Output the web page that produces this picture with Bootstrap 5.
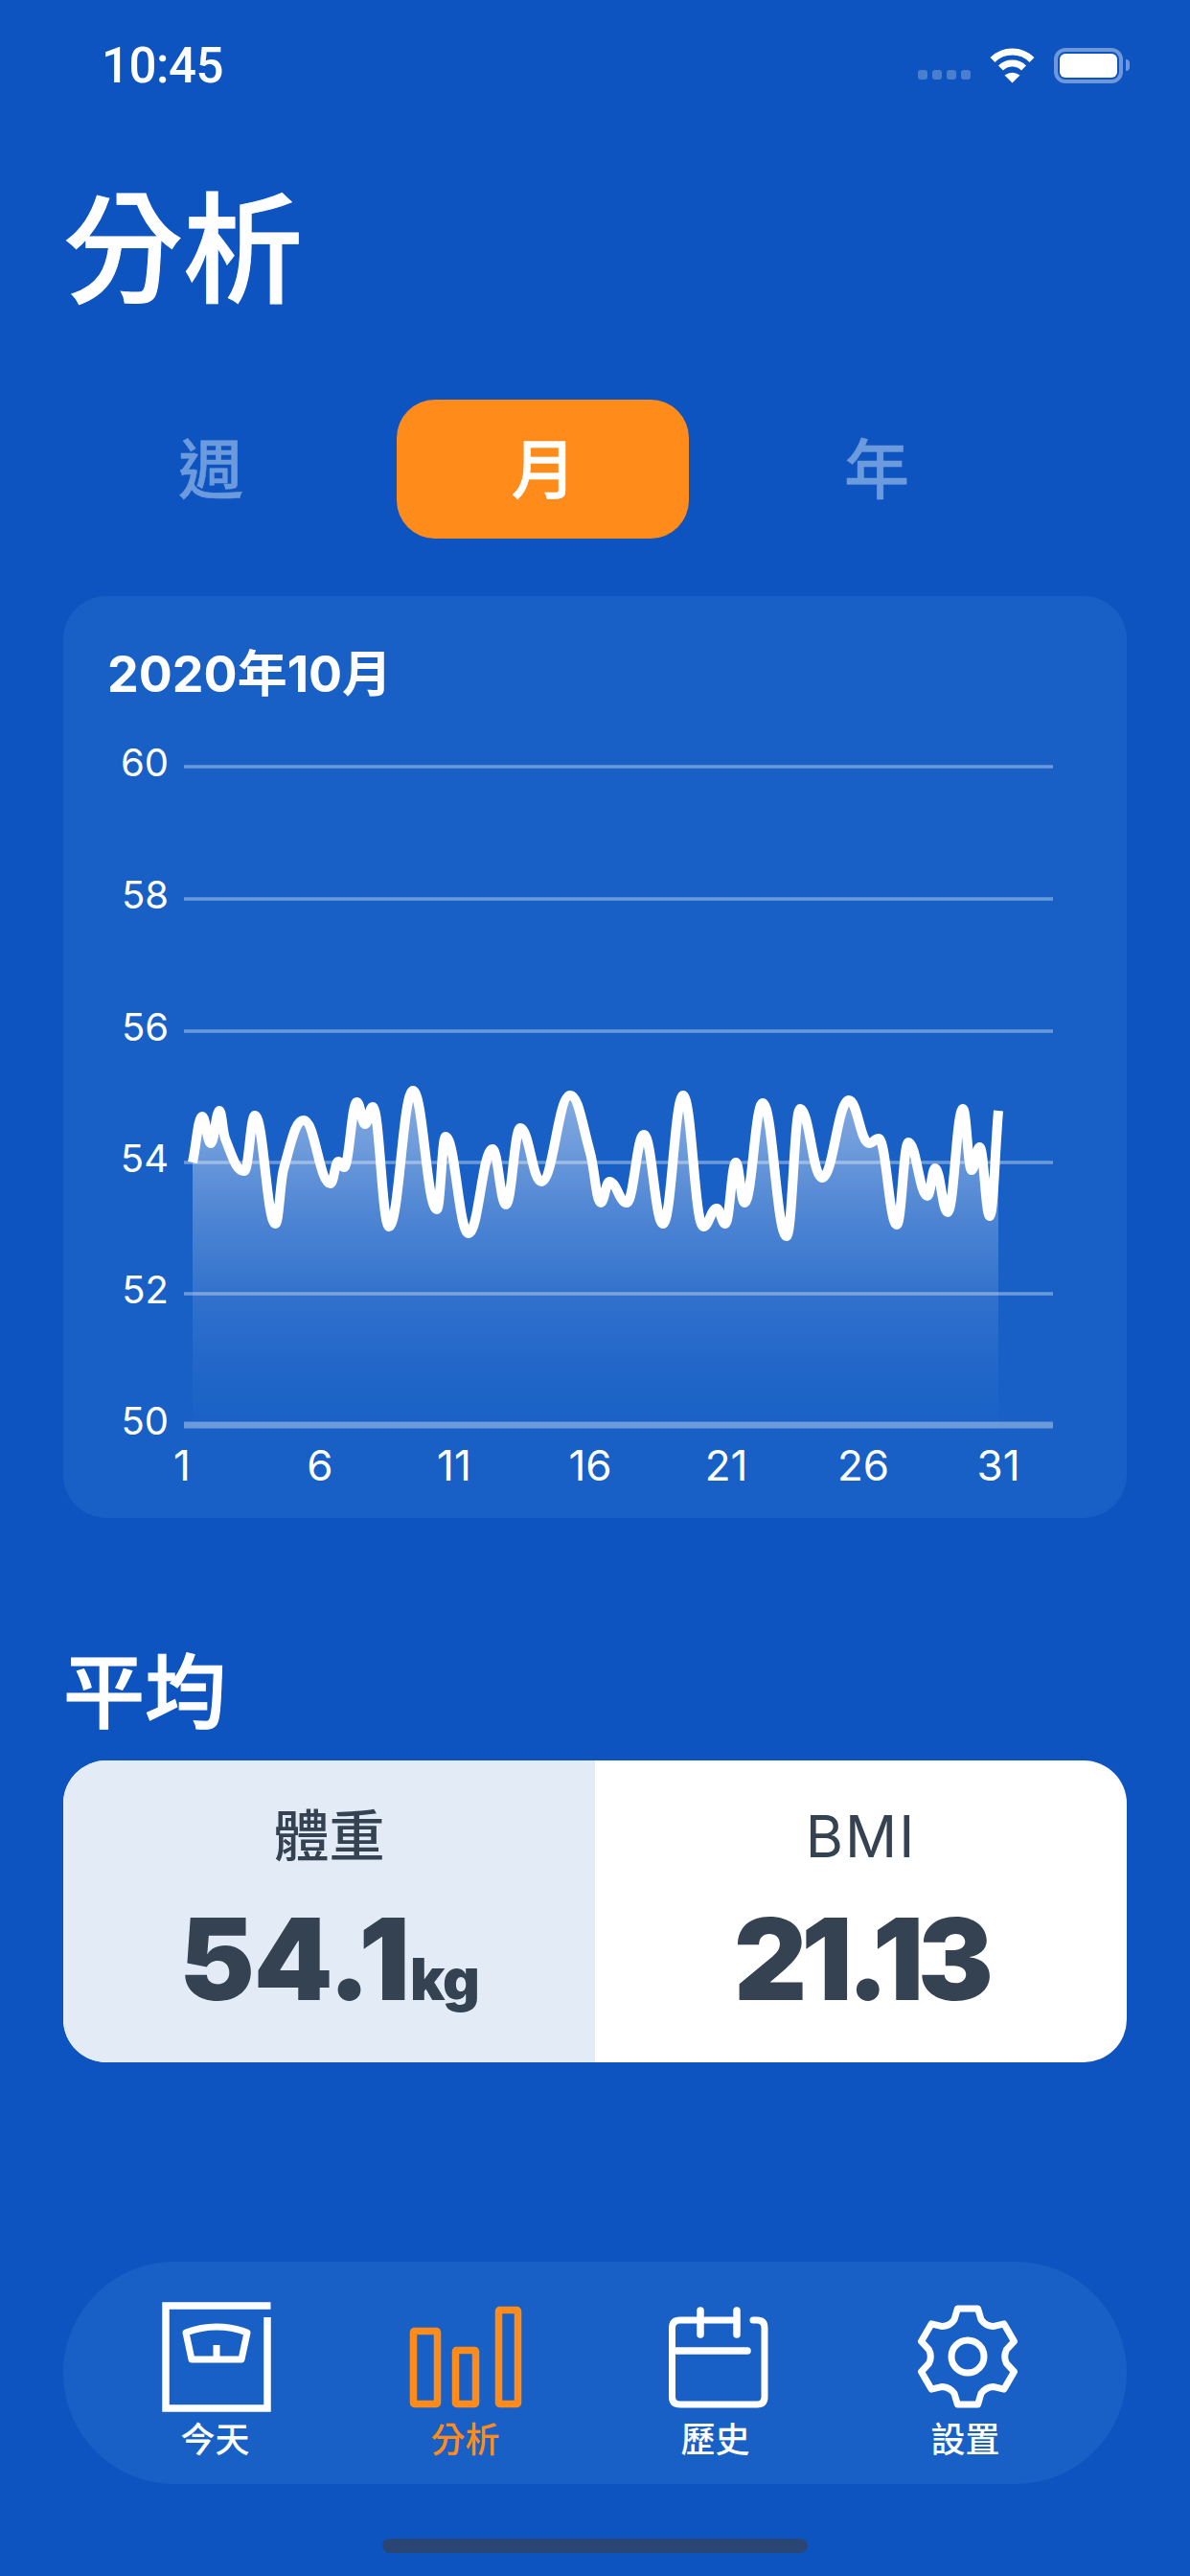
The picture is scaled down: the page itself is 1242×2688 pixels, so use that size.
<!DOCTYPE html>
<html lang="zh-Hant">
<head>
  <meta charset="UTF-8" />
  <meta name="viewport" content="width=device-width, initial-scale=1.0"/>
  <title>分析</title>
  <link href="https://cdn.jsdelivr.net/npm/bootstrap@5.3.3/dist/css/bootstrap.min.css" rel="stylesheet">
  <style>
    body {
      background: #0e54c0;
      color: #fff;
      font-family: "Inter", "Noto Sans CJK TC", sans-serif;
    }
    .phone {
      width: 1242px;
      height: 2688px;
      padding: 0 66px;
      overflow: hidden;
    }
    .status-row { height: 136px; padding-left: 40px; padding-right: 4px; }
    .status-time { font-size: 51px; font-weight: 500; line-height: 1; letter-spacing: -.5px; font-family: "Roboto", sans-serif; }
    .status-dots { gap: 5px; margin-top: 20px; margin-right: 20px; }
    .status-dots i { width: 10px; height: 10px; border-radius: 3px; background: rgba(255,255,255,.25); }
    .battery-box {
      width: 72px; height: 37px;
      margin-left: 20px;
      padding: 2px;
      border: 4px solid rgba(255,255,255,.4);
      border-radius: 12px;
    }
    .battery-box i { width: 100%; height: 100%; background: #fff; border-radius: 6px; }
    .battery-nub { width: 4px; height: 12px; margin: 0 -7px 0 3px; background: rgba(255,255,255,.4); border-radius: 0 4px 4px 0; }
    .page-title { margin: 62px 0 -2px; font-size: 125px; line-height: 126px; font-weight: 500; -webkit-text-stroke: 1px #fff; }
    .range-tabs { margin-top: 95px; gap: 42.5px; --bs-nav-pills-border-radius: 40px; --bs-nav-pills-link-active-bg: #ff8c1a; --bs-nav-pills-link-active-color: #fff; }
    .range-tabs .nav-link {
      width: 305px;
      height: 145px;
      padding: 0 0 0 3px;
      font-size: 68px;
      font-weight: 500;
      -webkit-text-stroke: .5px currentColor;
      line-height: 147px;
      text-align: center;
      color: #6c9bdd;
    }
    .range-tabs .nav-link.active { color: #fff; }
    .chart-card {
      height: 962px;
      margin-top: 60px;
      background: #1860c6;
      border: 0;
      border-radius: 45px;
      color: #fff;
    }
    .chart-heading { margin: 52px 0 36px 46px; font-size: 52px; line-height: 60px; font-weight: 700; }
    .chart-svg { display: block; }
    .chart-svg text { fill: #fff; font-family: "Inter", sans-serif; }
    .section-title { margin: 138px 0 25px; font-size: 85px; line-height: 90px; font-weight: 500; -webkit-text-stroke: 1px #fff; }
    .avg-card { height: 315px; border-radius: 45px; overflow: hidden; background: #fff; color: #354252; }
    .avg-weight { background: #e3ecf6; }
    .avg-label { margin-top: 46px; font-size: 58px; line-height: 66px; font-weight: 500; }
    .avg-label.is-latin { font-size: 60px; font-weight: 400; letter-spacing: 2px; }
    .avg-value { margin-top: 30px; font-size: 118px; line-height: 130px; font-weight: 900; letter-spacing: -6px; }
    .avg-value.is-wide { letter-spacing: -1px; }
    .avg-value small { font-size: 60px; letter-spacing: -1px; margin-left: 1px; }
    .tab-pill {
      height: 232px;
      margin-top: 208px;
      padding: 40px 28px 0;
      background: #1860c6;
      border-radius: 116px;
    }
    .tab-item { width: 261px; color: #fff; font-size: 36px; line-height: 44px; font-weight: 500; }
    .tab-item svg { display: block; margin-bottom: 4px; }
    .tab-item.is-on { color: #ff8c1a; }
    .home-bar { width: 444px; height: 15px; margin: 57px auto 0; background: #2a4674; border-radius: 8px; }
  </style>
</head>
<body>
  <div class="phone d-flex flex-column">
    <div class="status-row d-flex align-items-center justify-content-between">
      <span class="status-time">10:45</span>
      <div class="d-flex align-items-center">
        <div class="status-dots d-flex"><i></i><i></i><i></i><i></i></div>
        <svg width="47" height="37" viewBox="0 0 47 37">
          <path d="M3 12.5a29 29 0 0 1 41 0M11.5 21a17 17 0 0 1 24 0" fill="none" stroke="#fff" stroke-width="7"/>
          <path d="M23.5 36.5L15.5 28.5Q23.5 23 31.5 28.5Z" fill="#fff"/>
        </svg>
        <div class="battery-box d-flex"><i></i></div>
        <div class="battery-nub"></div>
      </div>
    </div>

    <h1 class="page-title">分析</h1>

    <div class="nav nav-pills range-tabs">
      <a class="nav-link" href="#">週</a>
      <a class="nav-link active" href="#">月</a>
      <a class="nav-link" href="#">年</a>
    </div>

    <div class="card chart-card">
      <div class="chart-heading">2020年10月</div>
      <svg class="chart-svg" id="chart" width="1110" height="800" viewBox="66 770 1110 800">
        <defs>
          <linearGradient id="areaFill" gradientUnits="userSpaceOnUse" x1="0" y1="1130" x2="0" y2="1487">
            <stop offset="0" stop-color="#fff" stop-opacity=".5"/>
            <stop offset=".364" stop-color="#fff" stop-opacity=".25"/>
            <stop offset=".644" stop-color="#fff" stop-opacity=".1"/>
            <stop offset=".832" stop-color="#fff" stop-opacity=".04"/>
            <stop offset="1" stop-color="#fff" stop-opacity=".01"/>
          </linearGradient>
        </defs>
      </svg>
    </div>

    <div class="section-title">平均</div>

    <div class="row g-0 avg-card text-center">
      <div class="col-6 avg-weight">
        <div class="avg-label">體重</div>
        <div class="avg-value is-wide">54.1<small>kg</small></div>
      </div>
      <div class="col-6">
        <div class="avg-label is-latin">BMI</div>
        <div class="avg-value">21.13</div>
      </div>
    </div>

    <div class="tab-pill d-flex">
      <div class="tab-item d-flex flex-column align-items-center">
        <svg width="130" height="120" viewBox="0 0 130 120" fill="none" stroke="#fff" stroke-width="7.5">
          <path d="M119 18V113H13V6H122.5"/>
          <path d="M34 34Q66 22 98 34L92 62H40ZM66 62V47" stroke-width="7" stroke-linejoin="round"/>
        </svg>
        今天
      </div>
      <div class="tab-item is-on d-flex flex-column align-items-center">
        <svg width="130" height="120" viewBox="0 0 130 120" fill="none" stroke="#ff8c1a" stroke-width="7.5">
          <rect x="10.5" y="32.5" width="25" height="76" rx="1"/>
          <rect x="54.5" y="52.5" width="21" height="56" rx="1"/>
          <rect x="99.5" y="10.5" width="20" height="98" rx="1"/>
        </svg>
        分析
      </div>
      <div class="tab-item d-flex flex-column align-items-center">
        <svg width="130" height="120" viewBox="0 0 130 120" fill="none" stroke="#fff" stroke-width="7" stroke-linecap="round">
          <path d="M104 21H108Q116 21 116 29V101Q116 109 108 109H28Q19.5 109 19.5 101V29Q19.5 21 28 21H45M54 21H82"/>
          <path d="M49 11V36M87 11V36M21 53H98" stroke-width="7.5"/>
        </svg>
        歷史
      </div>
      <div class="tab-item d-flex flex-column align-items-center">
        <svg width="130" height="120" viewBox="0 0 130 120" fill="none" stroke="#fff" stroke-width="7" stroke-linejoin="round">
          <path id="gear"/>
          <circle cx="67" cy="59" r="17"/>
        </svg>
        設置
      </div>
    </div>

    <div class="home-bar"></div>
  </div>

  <script src="https://cdn.jsdelivr.net/npm/bootstrap@5.3.3/dist/js/bootstrap.bundle.min.js"></script>
  <script>
    // weight line, traced point by point
    const LINE = [
      [201,1213],[211,1165],[220,1193],[229,1159],[235,1188],[255,1222],[266,1164],[287.5,1277],[296,1220],[317,1169],
      [345,1235],[353,1212],[359,1218],[372.5,1150],[381,1173],[389,1155],[406,1280],[431,1138],[456,1262],[465,1186],
      [489,1287],[514,1199],[528,1257],[543,1177],[565,1233],[595,1143],[616,1203],[627,1255],[636,1233],[654,1255],
      [672,1184],[692,1277],[713,1143],[734,1280],[748,1261],[757,1277],[768,1213],[777,1255],[796,1151],[821,1290],
      [835,1157],[858,1229],[886,1148],[907,1193],[917,1188],[936,1278],[948,1192],[968,1248],[976,1219],[989,1265],
      [1005,1157],[1014,1221],[1022.5,1197],[1033,1269],[1042,1159]
    ];
    const Y_LABELS = [[60,800],[58,938],[56,1076],[54,1213],[52,1350],[50,1487]];
    const X_LABELS = [[1,190],[6,334],[11,474],[16,616],[21,758],[26,901],[31,1042]];
    const SVG_NS = 'http://www.w3.org/2000/svg';
    const chart = document.getElementById('chart');

    function add(tag, attrs, text) {
      const el = document.createElementNS(SVG_NS, tag);
      Object.keys(attrs).forEach(k => el.setAttribute(k, attrs[k]));
      if (text !== undefined) el.textContent = text;
      chart.appendChild(el);
    }

    // monotone cubic, so the peaks stay flat on top
    function smoothPath(pts) {
      const tan = pts.map((p, i) => {
        if (i === 0 || i === pts.length - 1) {
          const q = pts[i === 0 ? 1 : i - 1];
          return (q[1] - p[1]) / (q[0] - p[0]);
        }
        const a = (p[1] - pts[i-1][1]) / (p[0] - pts[i-1][0]);
        const b = (pts[i+1][1] - p[1]) / (pts[i+1][0] - p[0]);
        return a * b <= 0 ? 0 : 2 * a * b / (a + b);
      });
      let d = `M${pts[0][0]} ${pts[0][1]}`;
      for (let i = 1; i < pts.length; i++) {
        const dx = (pts[i][0] - pts[i-1][0]) * 0.42;
        d += `C${pts[i-1][0] + dx} ${pts[i-1][1] + tan[i-1] * dx} ${pts[i][0] - dx} ${pts[i][1] - tan[i] * dx} ${pts[i][0]} ${pts[i][1]}`;
      }
      return d;
    }

    Y_LABELS.forEach(([v, y]) => {
      add('rect', {x: 192, y: y - (v === 50 ? 3.5 : 1.75), width: 907, height: v === 50 ? 7 : 3.5, fill: 'rgba(255,255,255,.36)'});
      add('text', {x: 176, y: y + 10, 'text-anchor': 'end', 'font-size': 40}, v);
    });
    X_LABELS.forEach(([v, x]) => {
      add('text', {x: x, y: 1545, 'text-anchor': 'middle', 'font-size': 44}, v);
    });
    const line = smoothPath(LINE);
    add('path', {d: line + 'V1490H201Z', fill: 'url(#areaFill)'});
    add('path', {d: line, fill: 'none', stroke: '#fff', 'stroke-width': 10, 'stroke-linejoin': 'round'});

    // six tooth gear for the settings tab
    function polar(deg, r) {
      const a = deg * Math.PI / 180;
      return `${(67 + r * Math.cos(a)).toFixed(1)} ${(59 + r * Math.sin(a)).toFixed(1)}`;
    }
    let gear = '';
    for (let i = 0; i < 6; i++) {
      const a = -90 + i * 60;
      gear += `${i ? 'L' : 'M'}${polar(a - 12, 51)}L${polar(a + 12, 51)}L${polar(a + 20, 41)}Q${polar(a + 30, 37)} ${polar(a + 40, 41)}`;
    }
    document.getElementById('gear').setAttribute('d', gear + 'Z');
  </script>
</body>
</html>
